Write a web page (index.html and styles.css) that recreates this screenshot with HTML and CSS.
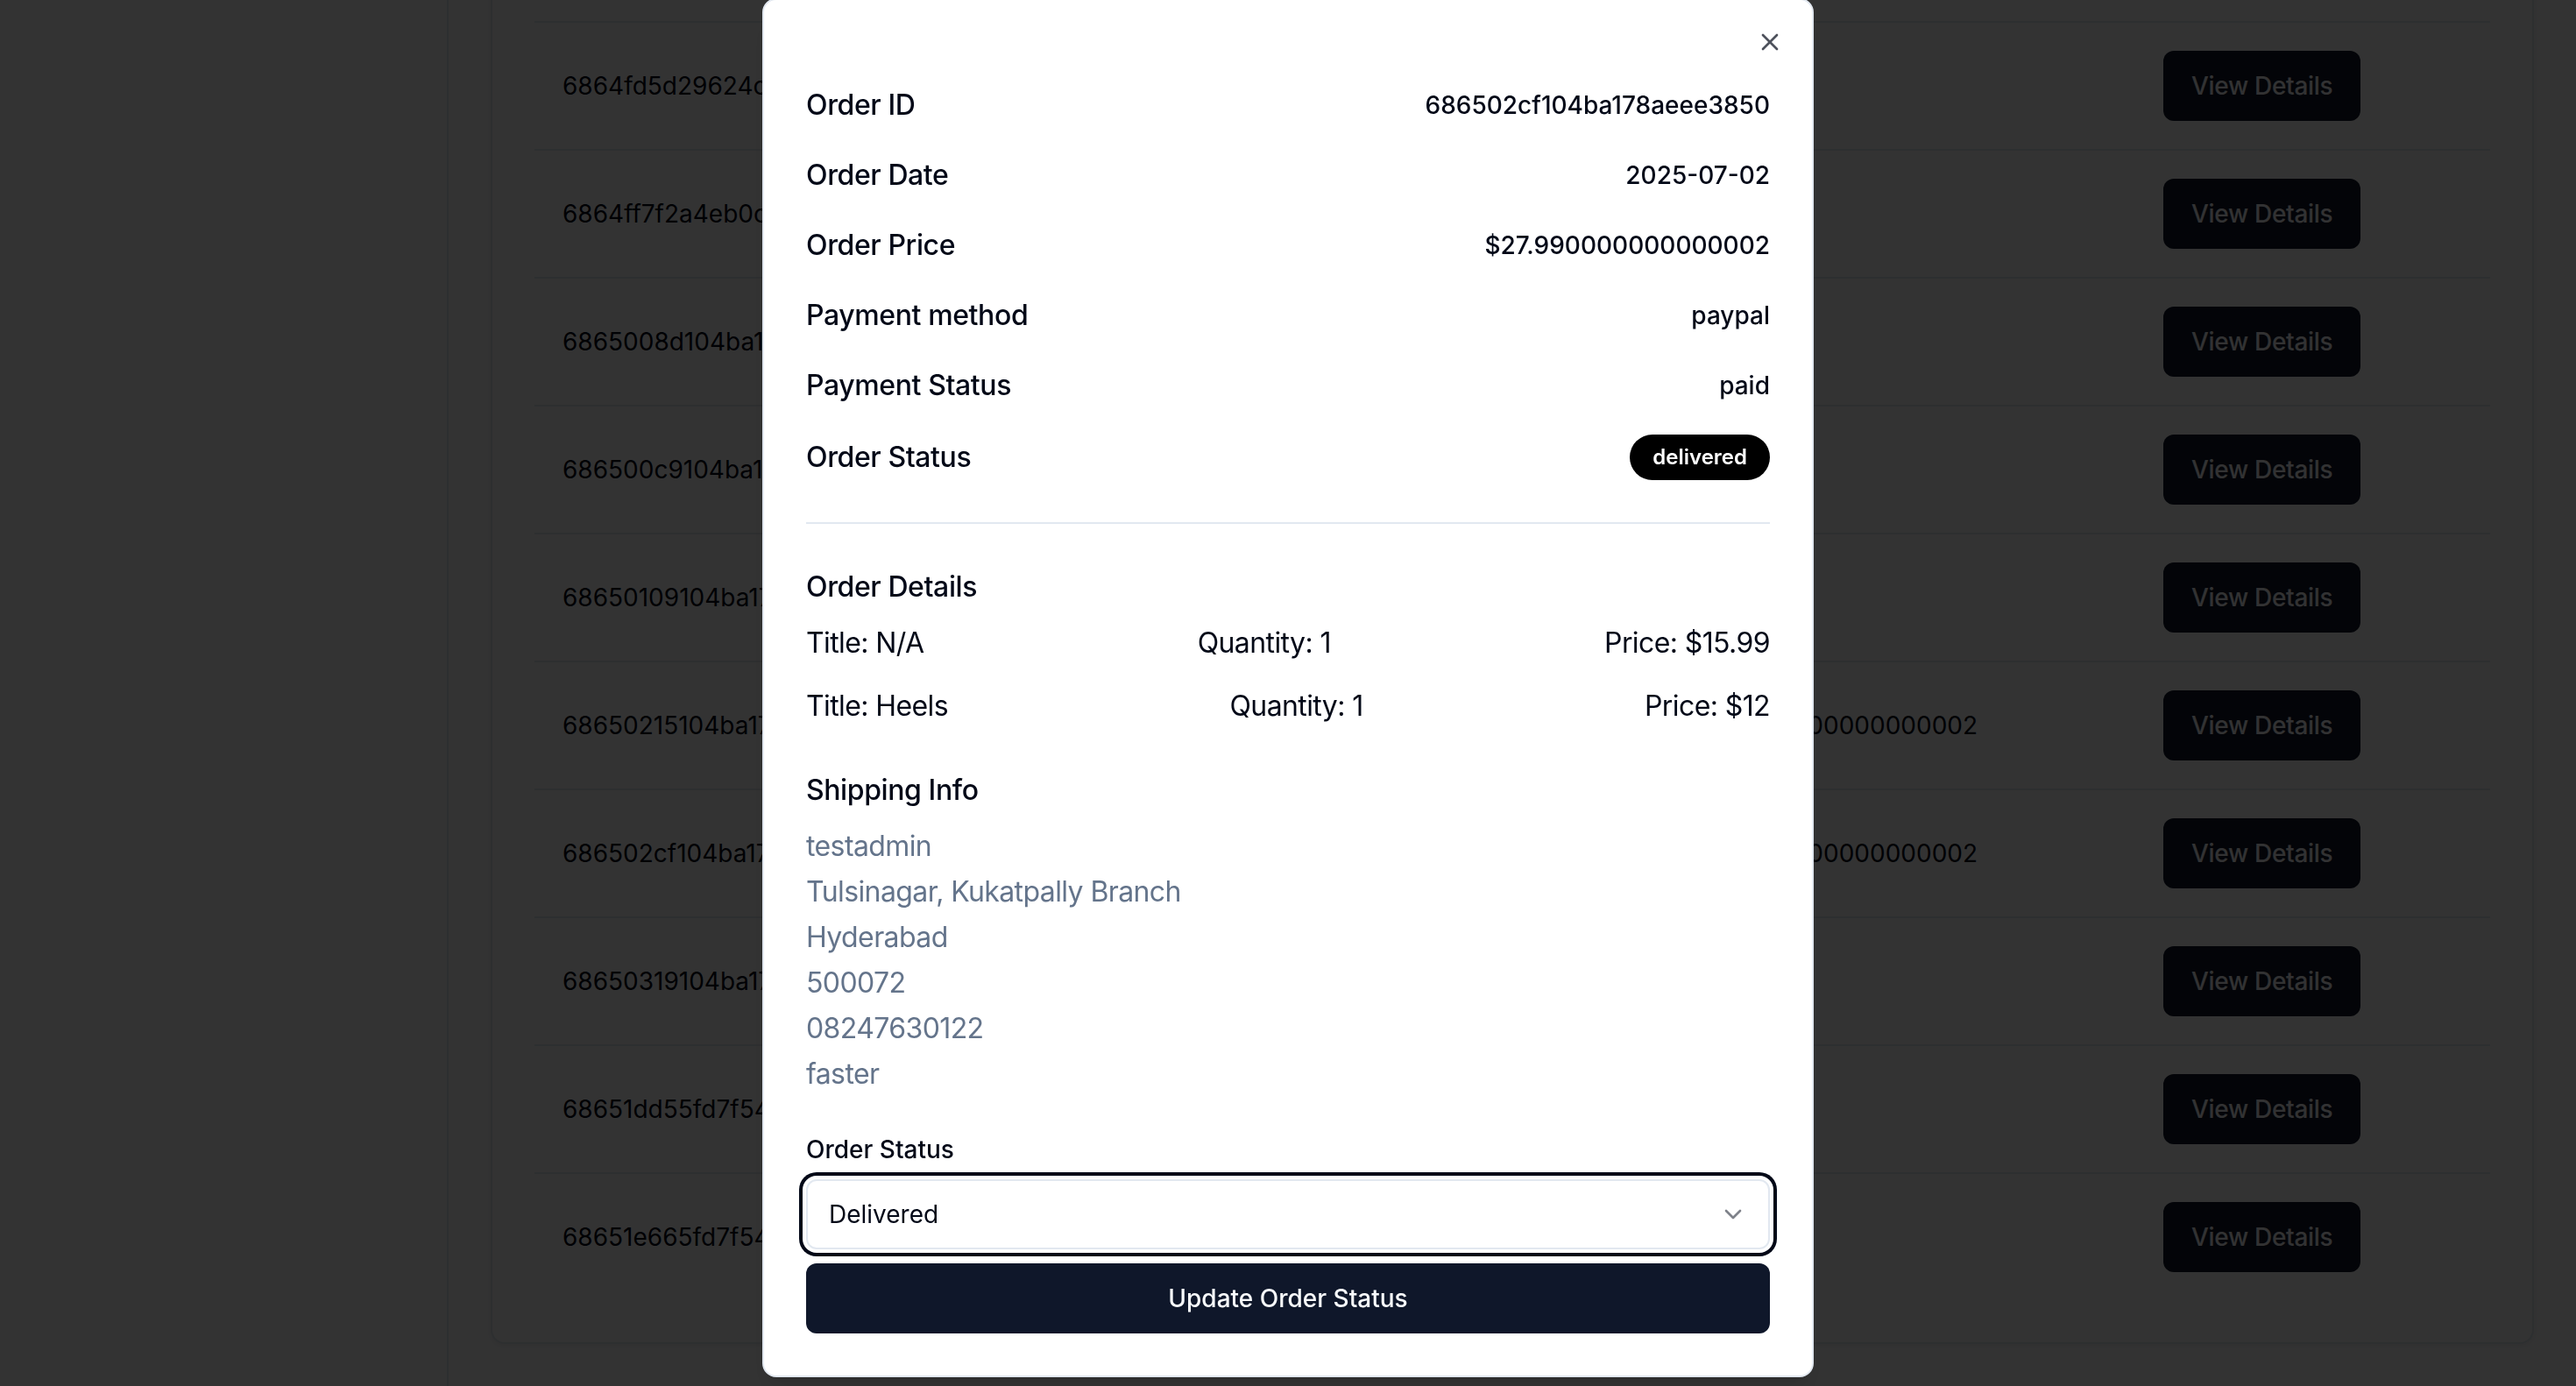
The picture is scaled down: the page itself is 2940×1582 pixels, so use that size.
FILE: index.html
```html
<!DOCTYPE html>
<html lang="en">
<head>
<meta charset="utf-8">
<title>Admin Orders</title>
<link rel="stylesheet" href="styles.css">
</head>
<body>
<div class="layout">
  <aside class="sidebar"></aside>
  <main class="main">
    <section class="card">
      <table class="orders">
        <colgroup>
          <col class="c-id"><col class="c-hidden"><col class="c-price"><col class="c-action">
        </colgroup>
        <tbody>
          <tr><td>6864fd5d29624c8</td><td></td><td></td><td><button class="vd">View Details</button></td></tr>
          <tr><td>6864ff7f2a4eb0c</td><td></td><td></td><td><button class="vd">View Details</button></td></tr>
          <tr><td>6865008d104ba17</td><td></td><td></td><td><button class="vd">View Details</button></td></tr>
          <tr><td>686500c9104ba17</td><td></td><td></td><td><button class="vd">View Details</button></td></tr>
          <tr><td>68650109104ba17</td><td></td><td></td><td><button class="vd">View Details</button></td></tr>
          <tr><td>68650215104ba17</td><td></td><td>$27.990000000000002</td><td><button class="vd">View Details</button></td></tr>
          <tr><td>686502cf104ba17</td><td></td><td>$27.990000000000002</td><td><button class="vd">View Details</button></td></tr>
          <tr><td>68650319104ba17</td><td></td><td></td><td><button class="vd">View Details</button></td></tr>
          <tr><td>68651dd55fd7f54</td><td></td><td></td><td><button class="vd">View Details</button></td></tr>
          <tr><td>68651e665fd7f54</td><td></td><td></td><td><button class="vd">View Details</button></td></tr>
        </tbody>
      </table>
    </section>
  </main>
</div>

<div class="overlay"></div>

<div class="dialog" role="dialog">
  <button class="close" aria-label="Close">
    <svg viewBox="0 0 24 24" fill="none" stroke="currentColor" stroke-width="2" stroke-linecap="round" stroke-linejoin="round"><path d="M18 6 6 18"/><path d="m6 6 12 12"/></svg>
  </button>
  <div class="stack">
    <div class="info">
      <div class="row first"><p class="label">Order ID</p><span class="value">686502cf104ba178aeee3850</span></div>
      <div class="row"><p class="label">Order Date</p><span class="value">2025-07-02</span></div>
      <div class="row"><p class="label">Order Price</p><span class="value">$27.990000000000002</span></div>
      <div class="row"><p class="label">Payment method</p><span class="value">paypal</span></div>
      <div class="row"><p class="label">Payment Status</p><span class="value">paid</span></div>
      <div class="row"><p class="label">Order Status</p><span class="value"><span class="badge">delivered</span></span></div>
    </div>
    <div class="sep"></div>
    <div class="section">
      <div class="section-title">Order Details</div>
      <ul class="items">
        <li class="item"><span>Title: N/A</span><span>Quantity: 1</span><span>Price: $15.99</span></li>
        <li class="item"><span>Title: Heels</span><span>Quantity: 1</span><span>Price: $12</span></li>
      </ul>
    </div>
    <div class="section">
      <div class="section-title">Shipping Info</div>
      <div class="ship">
        <span>testadmin</span>
        <span>Tulsinagar, Kukatpally Branch</span>
        <span>Hyderabad</span>
        <span>500072</span>
        <span>08247630122</span>
        <span>faster</span>
      </div>
    </div>
    <form class="form">
      <div class="field">
        <label class="field-label">Order Status</label>
        <div class="select">
          <span>Delivered</span>
          <svg class="chev" viewBox="0 0 24 24" fill="none" stroke="currentColor" stroke-width="2" stroke-linecap="round" stroke-linejoin="round"><path d="m6 9 6 6 6-6"/></svg>
        </div>
      </div>
      <button type="button" class="submit">Update Order Status</button>
    </form>
  </div>
</div>
</body>
</html>
```
FILE: styles.css
```css
* { box-sizing: border-box; }
html, body {
  margin: 0;
  padding: 0;
}
body {
  width: 2940px;
  height: 1582px;
  overflow: hidden;
  font-family: Inter, "Noto Sans", "Liberation Sans", sans-serif;
  color: #020817;
  background: #ffffff;
}

/* ---------- underlying page (scrolled) ---------- */
.layout {
  display: flex;
  height: 1582px;
}
.sidebar {
  width: 512px;
  flex: none;
  background: #ffffff;
  border-right: 2px solid #e2e8f0;
}
.main {
  flex: 1;
  padding: 0 48px 48px 48px;
  background: #fcfcfd;
  display: flex;
  flex-direction: column;
}
.card {
  margin-top: -100px;
  background: #ffffff;
  border: 2px solid #e2e8f0;
  border-radius: 16px;
  padding: 122px 48px 48px;
  box-shadow: 0 2px 4px rgba(0,0,0,0.05);
}
.orders {
  width: 100%;
  border-collapse: separate;
  border-spacing: 0;
  table-layout: fixed;
  font-size: 28px;
  line-height: 40px;
}
.c-id { width: 292px; }
.c-hidden { width: 1004px; }
.c-price { width: 531px; }
.c-action { width: 405px; }
.orders td {
  padding: 32px;
  vertical-align: middle;
  white-space: nowrap;
  border-bottom: 2px solid #e2e8f0;
}
.orders tr:first-child td { border-top: 2px solid #e2e8f0; }
.orders tr:last-child td { border-bottom: 0; }
.vd {
  height: 80px;
  padding: 0 32px;
  border: 0;
  border-radius: 12px;
  background: #0f172a;
  color: #f8fafc;
  font-family: inherit;
  font-size: 28px;
  font-weight: 500;
  letter-spacing: -0.3px;
}

/* ---------- overlay ---------- */
.overlay {
  position: fixed;
  inset: 0;
  background: rgba(0, 0, 0, 0.8);
}

/* ---------- dialog ---------- */
.dialog {
  position: fixed;
  left: 870px;
  top: -2px;
  width: 1200px;
  background: #ffffff;
  border: 2px solid #e2e8f0;
  border-radius: 16px;
  padding: 48px;
  box-shadow: 0 20px 30px -6px rgba(0,0,0,0.1), 0 8px 12px -8px rgba(0,0,0,0.1);
}
.close {
  position: absolute;
  top: 32px;
  right: 32px;
  width: 32px;
  height: 32px;
  padding: 0;
  border: 0;
  background: transparent;
  color: #020817;
  opacity: 0.7;
  display: flex;
}
.close svg { width: 32px; height: 32px; }

.stack {
  display: grid;
  gap: 48px;
}
.info {
  display: grid;
  gap: 16px;
}
.row {
  display: flex;
  align-items: center;
  justify-content: space-between;
  margin-top: 16px;
}
.row.first { margin-top: 48px; }
.label {
  margin: 0;
  font-size: 32px;
  line-height: 48px;
  font-weight: 500;
  letter-spacing: -0.4px;
}
.value {
  font-size: 28px;
  line-height: 1;
  font-weight: 500;
}
.badge {
  display: inline-block;
  border: 2px solid transparent;
  padding: 8px 24px;
  border-radius: 999px;
  background: #000000;
  color: #ffffff;
  font-size: 24px;
  line-height: 32px;
  font-weight: 600;
}
.sep {
  height: 2px;
  background: #e2e8f0;
}
.section {
  display: grid;
  gap: 16px;
}
.section-title {
  font-size: 32px;
  line-height: 48px;
  font-weight: 500;
  letter-spacing: -0.4px;
}
.items {
  list-style: none;
  margin: 0;
  padding: 0;
  display: grid;
  gap: 24px;
}
.item {
  display: flex;
  align-items: center;
  justify-content: space-between;
  font-size: 32px;
  line-height: 48px;
  letter-spacing: -0.6px;
}
.ship {
  display: grid;
  gap: 4px;
  color: #64748b;
  font-size: 32px;
  line-height: 48px;
  letter-spacing: -0.6px;
}

.form {
  display: flex;
  flex-direction: column;
}
.field {
  display: grid;
  gap: 12px;
}
.field-label {
  font-size: 28px;
  line-height: 1;
  font-weight: 500;
  margin-bottom: 8px;
}
.select {
  height: 80px;
  display: flex;
  align-items: center;
  justify-content: space-between;
  padding: 0 24px;
  border: 2px solid #e2e8f0;
  border-radius: 12px;
  background: #ffffff;
  font-size: 28px;
  box-shadow: 0 0 0 4px #ffffff, 0 0 0 8px #020817;
}
.chev {
  width: 32px;
  height: 32px;
  opacity: 0.5;
}
.submit {
  margin-top: 16px;
  height: 80px;
  width: 100%;
  border: 0;
  border-radius: 12px;
  background: #0f172a;
  color: #f8fafc;
  font-family: inherit;
  font-size: 28px;
  font-weight: 500;
}
```
